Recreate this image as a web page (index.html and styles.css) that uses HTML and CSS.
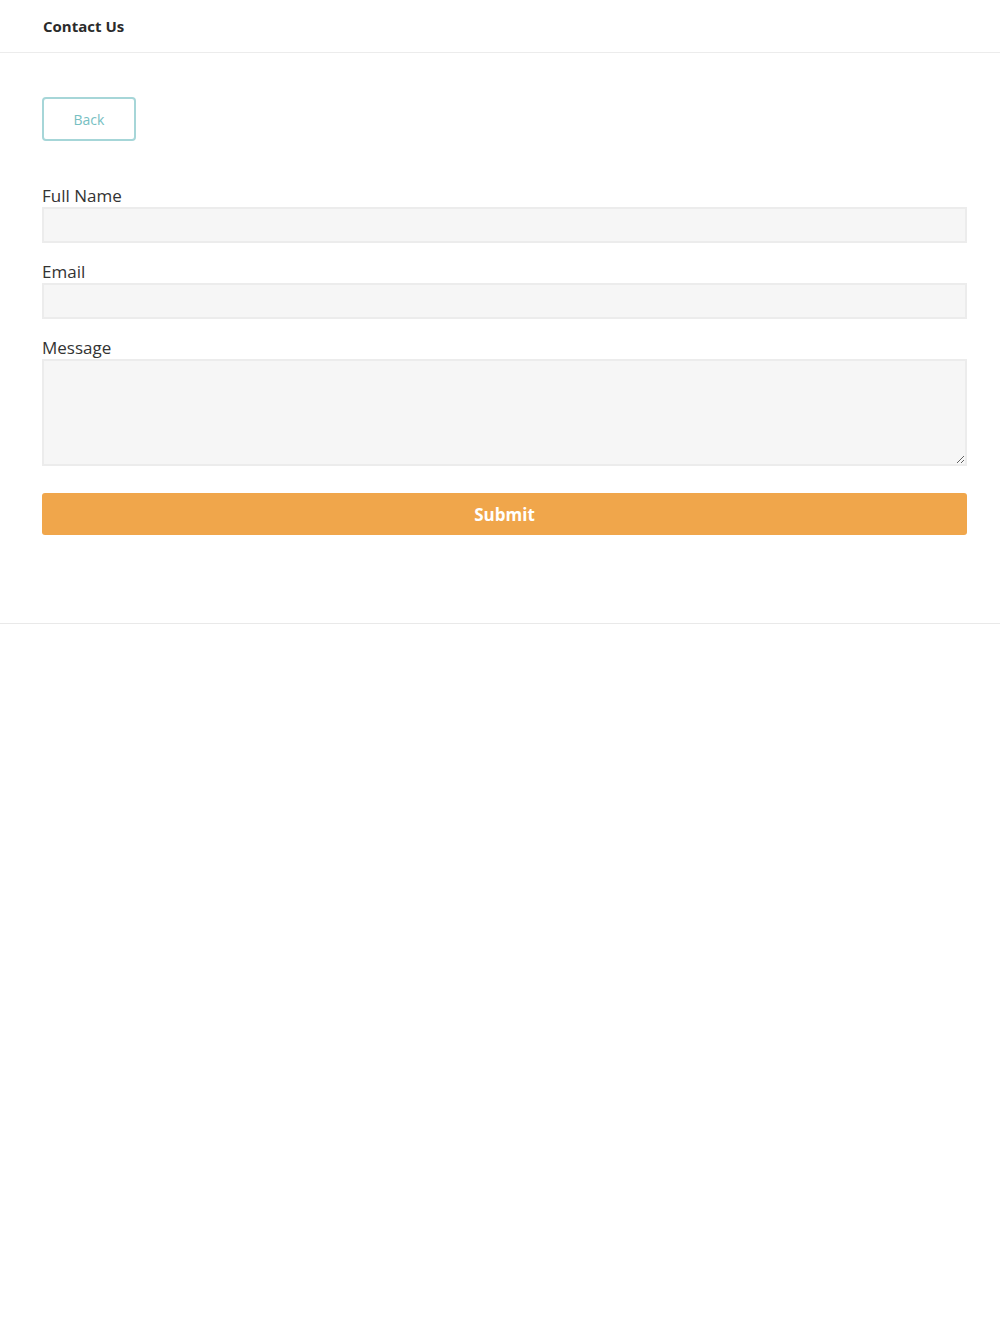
FILE: index.html
```html
<!DOCTYPE html>
<html>
<head>
<meta charset="utf-8" />
<title>Contact Us</title>
<link rel="stylesheet" href="styles.css">
</head>
<body>

<div class="top_bar">
	<h1 class="top_title">Contact Us</h1>
</div>

<div class="contact_wrap">
	<button class="back_btn" type="button">Back</button>

	<form class="contact_form">
		<label class="field_label" for="full_name">Full Name</label>
		<input class="field_input" id="full_name" type="text" />

		<label class="field_label" for="email">Email</label>
		<input class="field_input" id="email" type="email" />

		<label class="field_label" for="message">Message</label>
		<textarea class="field_area" id="message"></textarea>

		<button class="submit_btn" type="button">Submit</button>
	</form>
</div>

</body>
</html>
```
FILE: styles.css
```css
*{ margin:0; padding:0; box-sizing:border-box;}
body{
	background:#fff;
	font-family:"Open Sans","Noto Sans",sans-serif;
	color:#333;
}
.top_bar{
	height:53px;
	padding:0 43px;
	border-bottom:1px solid #ececec;
	display:flex;
	align-items:center;
}
.top_title{
	font-size:15px;
	font-weight:bold;
	color:#2b2b2b;
}
.contact_wrap{
	padding:44px 33px 88px 42px;
	border-bottom:1px solid #e9e9e9;
}
.back_btn{
	width:94px;
	height:44px;
	background:#fff;
	border:2px solid #a6d6d8;
	border-radius:4px;
	color:#77c0c2;
	font:14px "Open Sans","Noto Sans",sans-serif;
}
.contact_form{
	display:flex;
	flex-direction:column;
	margin-top:44px;
}
.field_label{
	font-size:17px;
	line-height:22px;
	color:#333;
}
.field_input,
.field_area{
	width:100%;
	background:#f6f6f6;
	border:2px solid #ececec;
	font:16px "Open Sans","Noto Sans",sans-serif;
	margin-bottom:18px;
}
.field_input{
	height:36px;
}
.field_area{
	height:107px;
	margin-bottom:27px;
	resize:vertical;
}
.submit_btn{
	height:42px;
	background:#f0a64b;
	border:none;
	border-radius:3px;
	color:#fff;
	font:bold 17px "Open Sans","Noto Sans",sans-serif;
}
```
